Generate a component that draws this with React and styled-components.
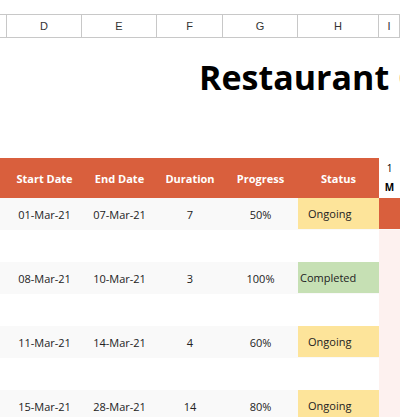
import React from 'react';
import styled, { createGlobalStyle } from 'styled-components';

const Global = createGlobalStyle`
  body { margin: 0; background: #fff; font-family: "Open Sans", sans-serif; }
`;

const COLS = '7px 75px 75px 66px 75px 81px 21px';

const Sheet = styled.div`
  width: 400px;
  height: 417px;
  overflow: hidden;
  padding-top: 14px;
  box-sizing: border-box;
`;

const Letters = styled.div`
  display: grid;
  grid-template-columns: ${COLS};
  height: 24px;
  border-top: 1px solid #c8c8c8;
  border-bottom: 1px solid #c8c8c8;
  box-sizing: border-box;
`;

const Letter = styled.div`
  display: flex;
  align-items: center;
  justify-content: center;
  border-right: 1px solid #c8c8c8;
  font-family: "Liberation Sans", Arial, sans-serif;
  font-size: 11px;
  color: #333;
`;

const TitleArea = styled.div`
  height: 120px;
  display: flex;
  align-items: flex-start;
  padding-left: 199px;
  padding-top: 16px;
  box-sizing: border-box;
  white-space: nowrap;
`;

const Title = styled.h1`
  margin: 0;
  font-size: 34px;
  font-weight: 700;
  color: #000;
`;

const Row = styled.div`
  display: grid;
  grid-template-columns: ${COLS};
  height: ${p => p.$h}px;
  background: ${p => p.$bg || '#fff'};
`;

const Head = styled.div`
  background: #d95f3d;
  color: #fff;
  font-weight: 700;
  font-size: 11px;
  display: flex;
  align-items: center;
  justify-content: center;
`;

const MonthCell = styled.div`
  background: #fff;
  font-size: 10px;
  display: flex;
  flex-direction: column;
  align-items: center;
  justify-content: center;
  line-height: 19px;
  b { font-weight: 700; }
`;

const Cell = styled.div`
  font-size: 11px;
  color: #222;
  display: flex;
  align-items: center;
  justify-content: center;
`;

const Status = styled(Cell)`
  justify-content: flex-start;
  padding-left: ${p => (p.$done ? 2 : 10)}px;
  background: ${p => (p.$done ? '#c6e0b4' : '#fde49a')};
  margin-bottom: 1px;
`;

const Gantt = styled.div`
  background: ${p => (p.$on ? '#d95f3d' : '#fdf1ef')};
  margin-bottom: ${p => (p.$on ? 1 : 0)}px;
`;

const Pink = styled.div`
  grid-column: 7;
  background: #fdf1ef;
`;

const rows = [
  ['01-Mar-21', '07-Mar-21', '7', '50%', 'Ongoing', true],
  ['08-Mar-21', '10-Mar-21', '3', '100%', 'Completed', false],
  ['11-Mar-21', '14-Mar-21', '4', '60%', 'Ongoing', false],
  ['15-Mar-21', '28-Mar-21', '14', '80%', 'Ongoing', false],
];

export default function App() {
  return (
    <Sheet>
      <Global />
      <Letters>
        {['', 'D', 'E', 'F', 'G', 'H', 'I'].map((l, i) => <Letter key={i}>{l}</Letter>)}
      </Letters>
      <TitleArea><Title>Restaurant Construction</Title></TitleArea>
      <Row $h={40}>
        <Head />
        <Head>Start Date</Head>
        <Head>End Date</Head>
        <Head>Duration</Head>
        <Head>Progress</Head>
        <Head>Status</Head>
        <MonthCell><span>1</span><b>M</b></MonthCell>
      </Row>
      {rows.map((r, i) => (
        <React.Fragment key={i}>
          <Row $h={32} $bg="#f9f9f9">
            <Cell />
            <Cell>{r[0]}</Cell>
            <Cell>{r[1]}</Cell>
            <Cell>{r[2]}</Cell>
            <Cell>{r[3]}</Cell>
            <Status $done={r[4] === 'Completed'}>{r[4]}</Status>
            <Gantt $on={r[5]} />
          </Row>
          {i < rows.length - 1 && <Row $h={32}><Pink /></Row>}
        </React.Fragment>
      ))}
    </Sheet>
  );
}
